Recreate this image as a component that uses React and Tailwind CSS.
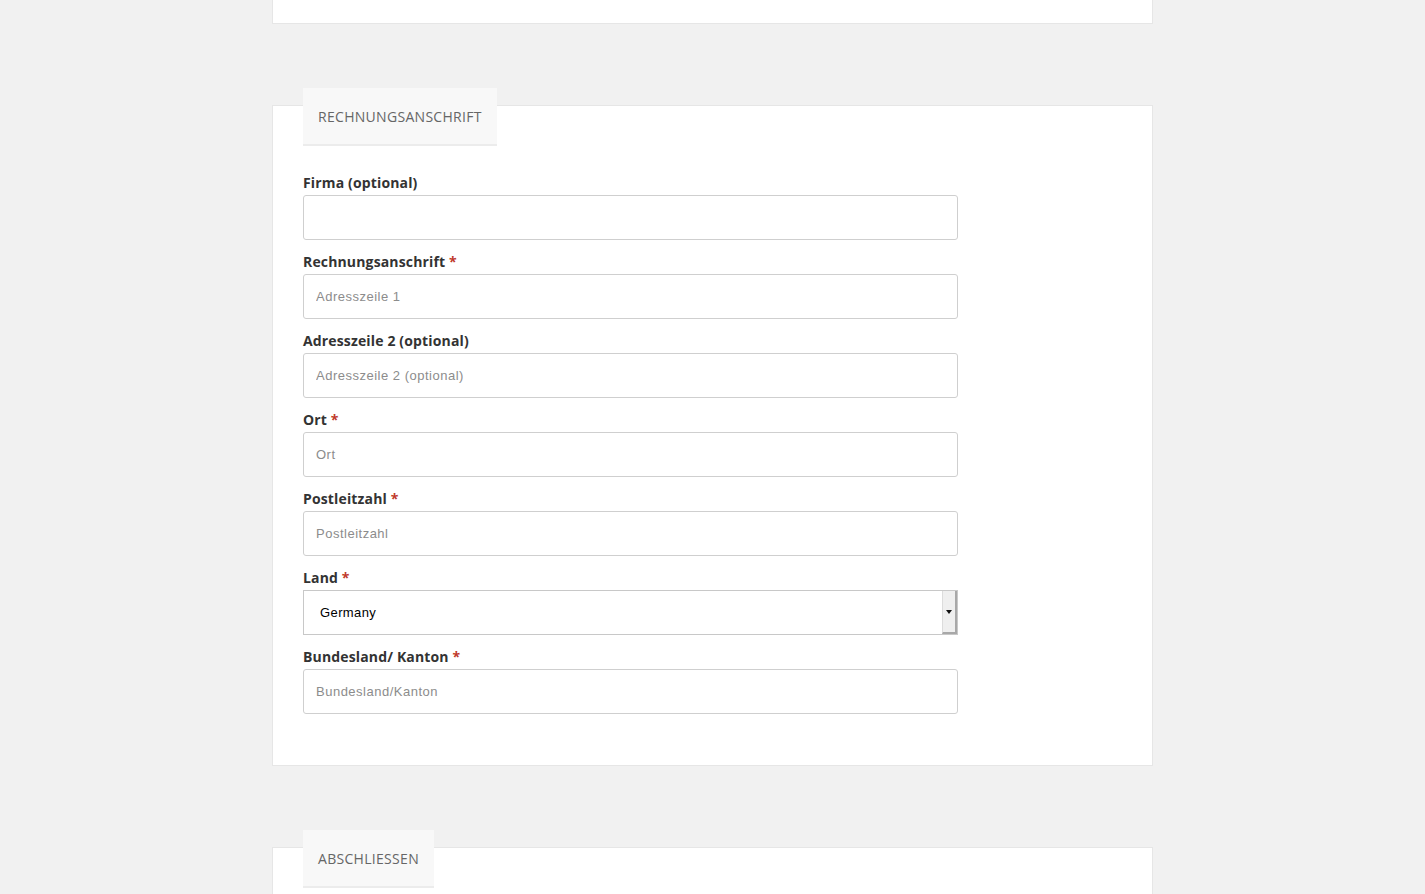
import React from 'react';

const fields = [
  { label: 'Firma (optional)', placeholder: '', required: false },
  { label: 'Rechnungsanschrift', placeholder: 'Adresszeile 1', required: true },
  { label: 'Adresszeile 2 (optional)', placeholder: 'Adresszeile 2 (optional)', required: false },
  { label: 'Ort', placeholder: 'Ort', required: true },
  { label: 'Postleitzahl', placeholder: 'Postleitzahl', required: true },
];

const Label = ({ text, required }) => (
  <label className="block pt-[1px] mb-[2px] text-[14px] leading-[20px] font-bold tracking-[0.15px] text-[#333] font-['Open_Sans',sans-serif]">
    {text}
    {required && <span className="text-[#c0392b]"> *</span>}
  </label>
);

const TextField = ({ label, placeholder, required }) => (
  <div className="mb-[11px]">
    <Label text={label} required={required} />
    <input
      type="text"
      placeholder={placeholder}
      className="block w-full h-[45px] px-[12px] border border-[#cfcfcf] rounded-[3px] bg-white text-[13px] tracking-[0.5px] text-[#333] placeholder:text-[#8c8c8c] font-['Liberation_Sans',Arial,sans-serif] outline-none"
    />
  </div>
);

const CountrySelect = () => (
  <div className="mb-[11px]">
    <Label text="Land" required />
    <div className="flex h-[45px] border border-[#c8c8c8] bg-white">
      <div className="flex-1 flex items-center pl-[16px] text-[13px] tracking-[0.4px] text-black font-['Liberation_Sans',Arial,sans-serif]">
        Germany
      </div>
      <div className="w-[15px] flex items-center justify-center bg-[#efefef] border-l border-[#dcdcdc] border-r-2 border-b-2 border-r-[#a8a8a8] border-b-[#a8a8a8]">
        <svg width="6" height="4" viewBox="0 0 6 4">
          <path d="M0 0h6L3 4z" fill="#111" />
        </svg>
      </div>
    </div>
  </div>
);

const Tab = ({ title }) => (
  <div className="w-fit mt-[-18px] h-[58px] px-[15px] bg-[#f8f8f8] border-b-2 border-[#ececec] text-[14px] leading-[58px] tracking-[0.3px] text-[#666] uppercase font-['Open_Sans',sans-serif]">
    {title}
  </div>
);

export default function App() {
  return (
    <div className="min-h-screen bg-[#f1f1f1] pb-[80px]">
      <div className="w-[881px] mx-auto">
        <div className="h-[24px] bg-white border border-t-0 border-[#e6e6e6]" />

        <div className="mt-[81px] bg-white border border-[#e6e6e6] px-[30px] pb-[40px]">
          <Tab title="Rechnungsanschrift" />
          <div className="w-[655px] mt-[26px]">
            {fields.map((f) => (
              <TextField key={f.label} {...f} />
            ))}
            <CountrySelect />
            <TextField label="Bundesland/ Kanton" placeholder="Bundesland/Kanton" required />
          </div>
        </div>

        <div className="mt-[81px] bg-white border border-[#e6e6e6] px-[30px] h-[200px]">
          <Tab title="Abschliessen" />
        </div>
      </div>
    </div>
  );
}
